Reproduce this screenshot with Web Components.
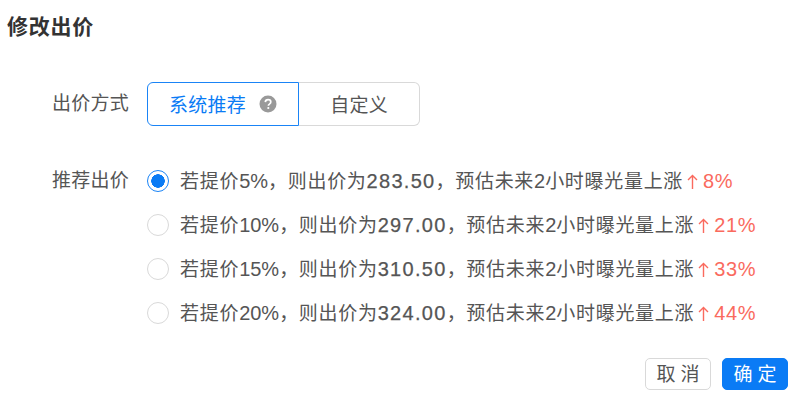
<!DOCTYPE html>
<html lang="zh">
<head>
<meta charset="utf-8">
<title>修改出价</title>
<style>
  html, body { margin: 0; padding: 0; background: #fff; }
  body { width: 800px; height: 400px; overflow: hidden; font-family: "Liberation Sans", "Noto Sans CJK SC", sans-serif; color: #555; }
</style>
</head>
<body>
<bid-dialog>
  <span slot="title">修改出价</span>
  <bid-field label="出价方式" style="--label-line: 44px">
    <bid-segment>
      <bid-segment-item active>系统推荐<bid-help slot="icon"></bid-help></bid-segment-item>
      <bid-segment-item>自定义</bid-segment-item>
    </bid-segment>
  </bid-field>
  <bid-field label="推荐出价" style="--label-line: 36px">
    <bid-options>
      <bid-option checked raise="5" price="283.50" rate="8"></bid-option>
      <bid-option raise="10" price="297.00" rate="21"></bid-option>
      <bid-option raise="15" price="310.50" rate="33"></bid-option>
      <bid-option raise="20" price="324.00" rate="44"></bid-option>
    </bid-options>
  </bid-field>
  <bid-button slot="footer">取消</bid-button>
  <bid-button slot="footer" primary>确定</bid-button>
</bid-dialog>

<script>
window.customElements.define('bid-dialog', class BidDialog extends HTMLElement {
  constructor() {
    super()
    this.attachShadow({ mode: 'open' })
    this.shadowRoot.innerHTML = `
      <style>
        :host { display: flex; flex-direction: column; box-sizing: border-box; width: 800px; height: 400px; padding: 13px 12px 10px 7px; }
        .title { font-size: 21px; font-weight: 700; letter-spacing: .75px; line-height: 28px; color: #333; }
        .body { display: flex; flex-direction: column; gap: 37px; padding: 41px 0 0 45px; }
        .footer { display: flex; justify-content: flex-end; gap: 11px; margin-top: auto; }
      </style>
      <div class="title"><slot name="title"></slot></div>
      <div class="body"><slot></slot></div>
      <div class="footer"><slot name="footer"></slot></div>`
  }
})

window.customElements.define('bid-field', class BidField extends HTMLElement {
  constructor() {
    super()
    this.attachShadow({ mode: 'open' })
    this.shadowRoot.innerHTML = `
      <style>
        :host { display: flex; align-items: flex-start; gap: 18px; }
        .label { font-size: 19px; letter-spacing: .25px; color: #555; line-height: var(--label-line, 44px); white-space: nowrap; }
      </style>
      <div class="label">${this.getAttribute('label')}</div>
      <slot></slot>`
  }
})

window.customElements.define('bid-segment', class BidSegment extends HTMLElement {
  constructor() {
    super()
    this.attachShadow({ mode: 'open' })
    this.shadowRoot.innerHTML = `
      <style>
        :host { display: flex; }
      </style>
      <slot></slot>`
  }
})

window.customElements.define('bid-segment-item', class BidSegmentItem extends HTMLElement {
  constructor() {
    super()
    this.attachShadow({ mode: 'open' })
    this.shadowRoot.innerHTML = `
      <style>
        :host { display: flex; align-items: center; justify-content: center; gap: 13px; box-sizing: border-box; width: 121px; height: 44px; font-size: 19px; letter-spacing: .25px; color: #555; border: 1.5px solid #d9d9d9; border-left: 0; border-radius: 0 6px 6px 0; }
        :host([active]) { width: 152px; color: #0a7bf5; border: 1.5px solid #1a84f6; border-radius: 6px 0 0 6px; }
        span { padding-bottom: 2px; }
      </style>
      <span><slot></slot></span><slot name="icon"></slot>`
  }
})

window.customElements.define('bid-help', class BidHelp extends HTMLElement {
  constructor() {
    super()
    this.attachShadow({ mode: 'open' })
    this.shadowRoot.innerHTML = `
      <style>
        :host { display: block; width: 18px; height: 18px; }
        svg { display: block; }
      </style>
      <svg width="18" height="18" viewBox="0 0 18 18">
        <circle cx="9" cy="9" r="8.5" fill="#999"/>
        <path d="M6.3 7.1C6.4 5.5 7.5 4.6 9.1 4.6c1.6 0 2.7.9 2.7 2.3 0 1-.5 1.6-1.4 2.2-.8.5-1 .8-1 1.6" fill="none" stroke="#fff" stroke-width="1.7"/>
        <circle cx="9.3" cy="13" r="1.1" fill="#fff"/>
      </svg>`
  }
})

window.customElements.define('bid-options', class BidOptions extends HTMLElement {
  constructor() {
    super()
    this.attachShadow({ mode: 'open' })
    this.shadowRoot.innerHTML = `
      <style>
        :host { display: flex; flex-direction: column; gap: 8px; }
      </style>
      <slot></slot>`
  }
})

window.customElements.define('bid-option', class BidOption extends HTMLElement {
  constructor() {
    super()
    this.attachShadow({ mode: 'open' })
    const raise = this.getAttribute('raise')
    const price = this.getAttribute('price')
    const rate = this.getAttribute('rate')
    this.shadowRoot.innerHTML = `
      <style>
        :host { display: flex; align-items: center; gap: 11px; height: 36px; font-size: 19px; letter-spacing: .7px; color: #555; white-space: nowrap; }
        .radio { box-sizing: border-box; width: 22px; height: 22px; border-radius: 50%; border: 1.5px solid #d9d9d9; background: #fff; flex: none; }
        :host([checked]) .radio { border-color: #1a84f6; background: radial-gradient(circle, #0a7bf5 0 6.5px, #fff 7px); }
        .text { padding-bottom: 4px; }
        .num { font-size: 20px; letter-spacing: 0; }
        .price { font-size: 20px; letter-spacing: 1.3px; -webkit-text-stroke: .25px #555; }
        .rate { font-size: 20px; color: #fa6a5e; letter-spacing: .6px; }
        .rate svg { display: inline-block; vertical-align: -2px; margin: 0 5px 0 4px; }
      </style>
      <span class="radio"></span>
      <span class="text">若提价<span class="num">${raise}%</span>，则出价为<span class="price">${price}</span>，预估未来<span class="num">2</span>小时曝光量上涨<span class="rate"><svg width="11" height="16" viewBox="0 0 11 16"><path d="M5.5 15V1.5M1 6l4.5-4.5L10 6" fill="none" stroke="#fa6a5e" stroke-width="1.4"/></svg>${rate}%</span></span>`
  }
})

window.customElements.define('bid-button', class BidButton extends HTMLElement {
  constructor() {
    super()
    this.attachShadow({ mode: 'open' })
    const label = this.textContent.trim()
    this.shadowRoot.innerHTML = `
      <style>
        :host { display: flex; align-items: center; justify-content: center; box-sizing: border-box; width: 66px; height: 32px; font-size: 19px; letter-spacing: 5px; text-indent: 5px; color: #555; background: #fff; border: 1.5px solid #d9d9d9; border-radius: 5px; }
        :host([primary]) { color: #fff; background: #0a7bf5; border-color: #0a7bf5; }
        span { padding-bottom: 3px; }
      </style>
      <span>${label}</span>`
  }
})
</script>
</body>
</html>
